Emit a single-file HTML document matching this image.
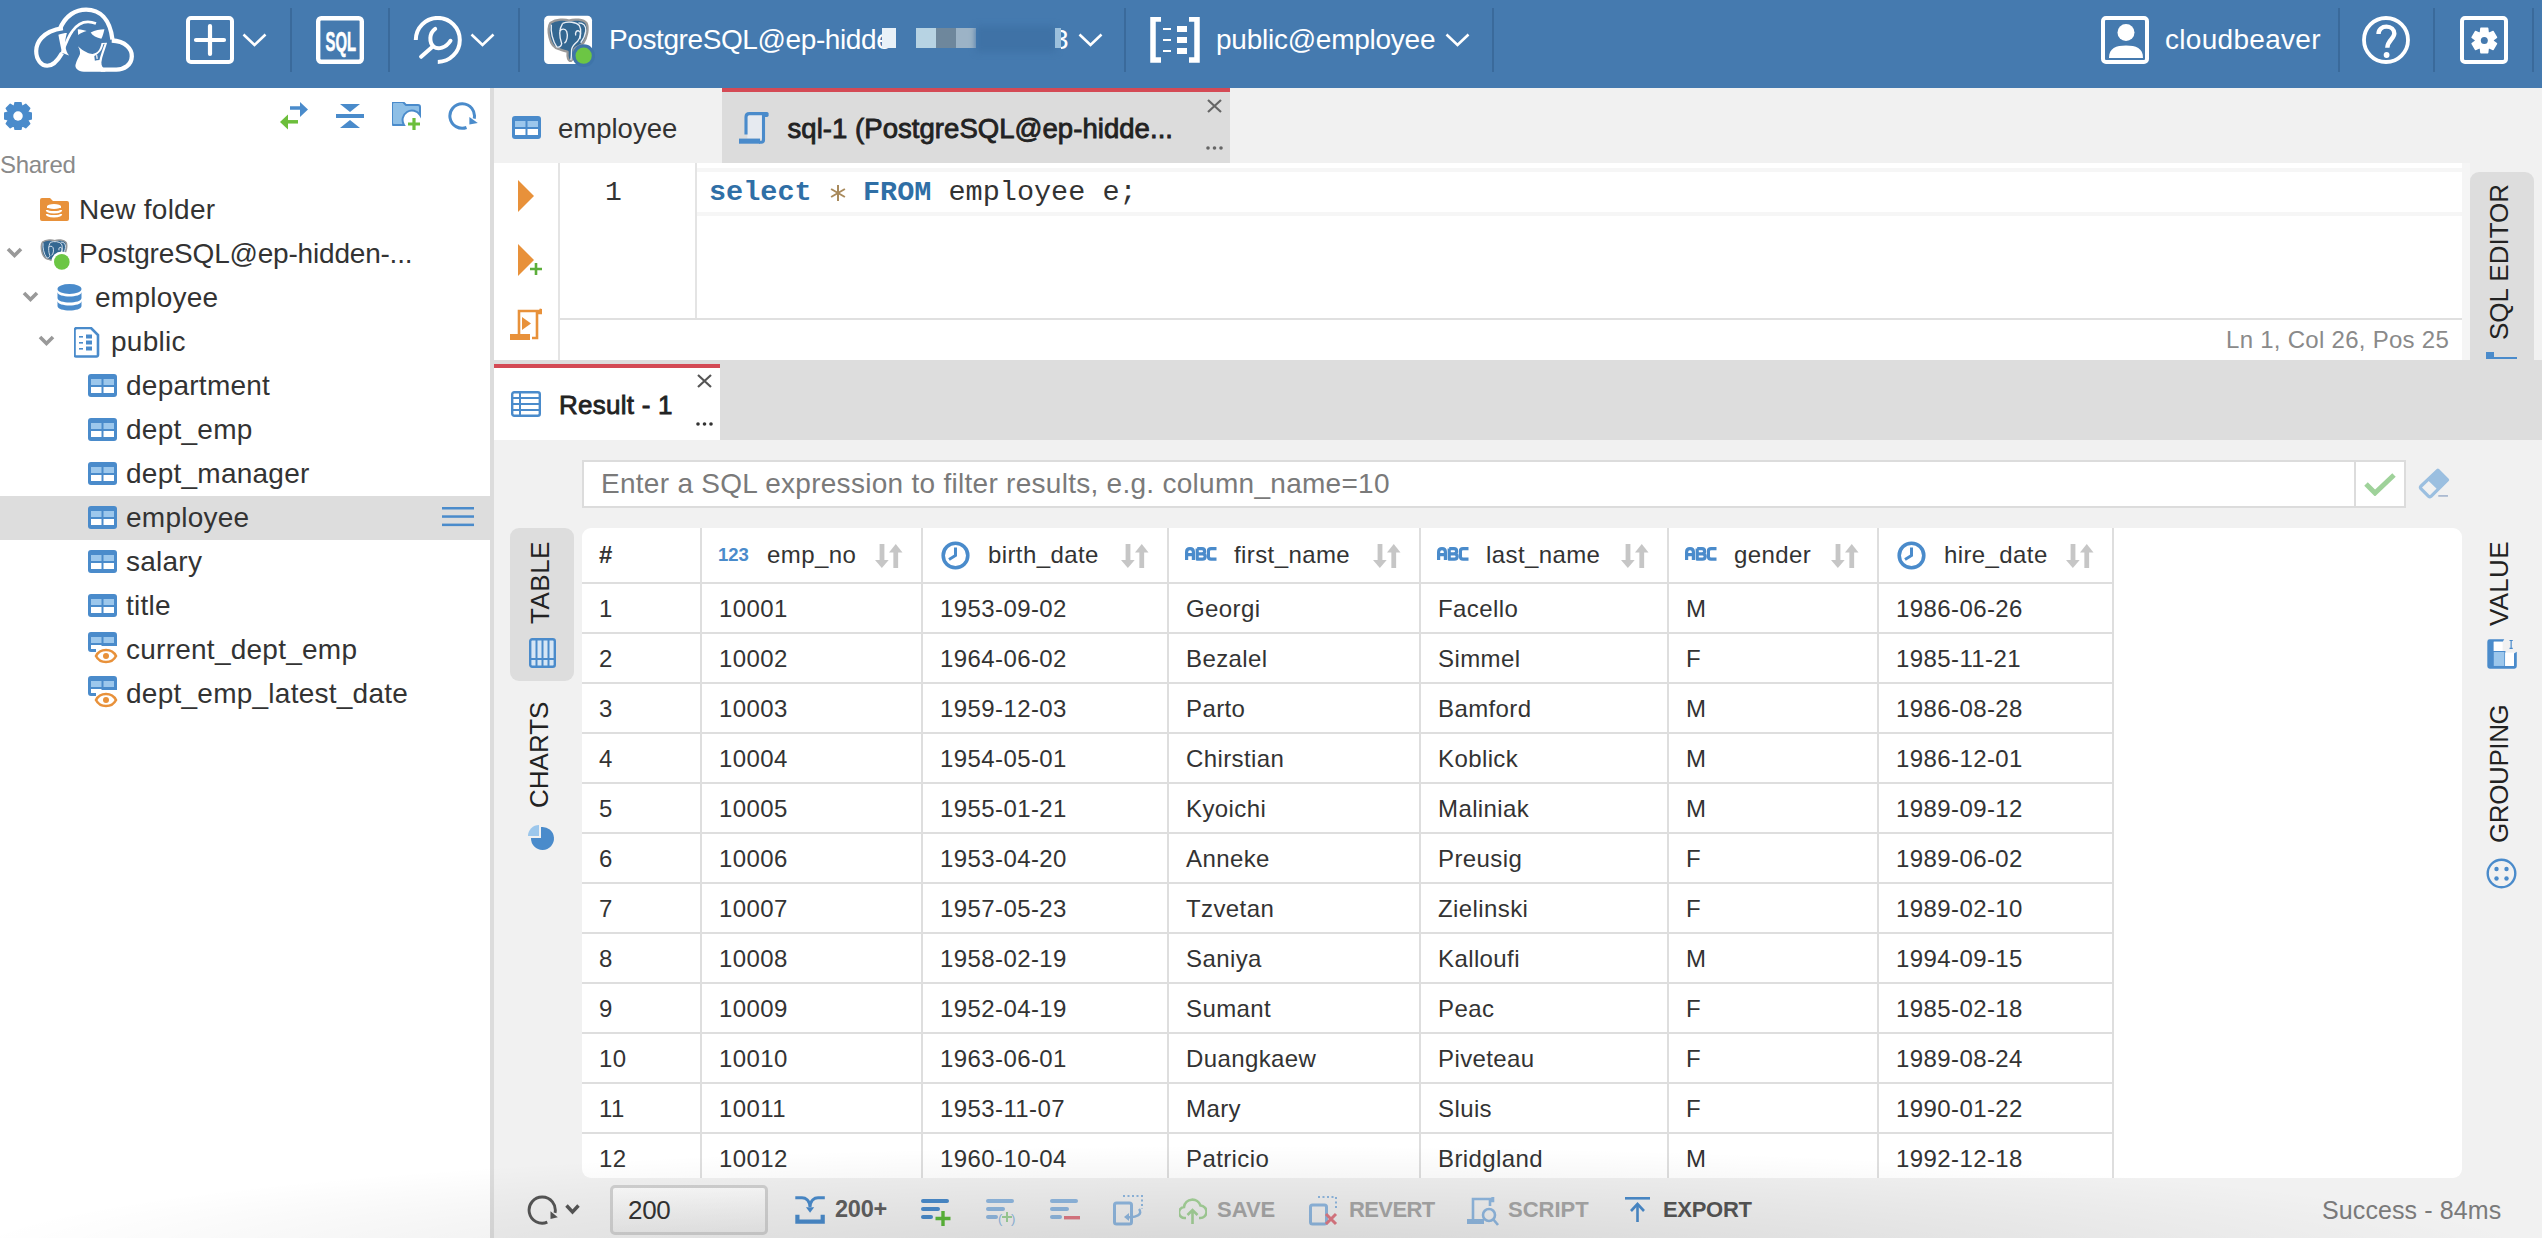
<!DOCTYPE html>
<html><head><meta charset="utf-8"><title>CloudBeaver</title>
<style>
html,body{margin:0;padding:0}
body{width:2542px;height:1238px;overflow:hidden;position:relative;background:#f1f1f1;font-family:"Liberation Sans",sans-serif}
.t{position:absolute;white-space:pre;line-height:1}
.b{position:absolute}
</style></head><body>
<div class="b" style="left:0px;top:0px;width:2542px;height:88px;background:#457aaf"></div>
<svg class="b" style="left:28px;top:4px" width="112" height="72" viewBox="0 0 1926 1238">
<g fill="none" stroke="#fff" stroke-linecap="butt">
<path stroke-width="74" d="M545 440 C640 190 830 95 1000 95 C1230 95 1410 250 1452 610"/>
<path stroke-width="74" d="M1440 628 C1680 635 1790 780 1785 900 C1780 1050 1650 1128 1520 1128 L1250 1128"/>
<path stroke-width="72" d="M600 415 C230 470 141 680 141 810 C141 960 230 1062 330 1062 C430 1062 520 960 585 845"/>
<path stroke-width="46" d="M585 845 C640 700 690 560 760 470 C860 330 1000 270 1169 337"/>
</g>
<path fill="#fff" d="M523 527 C580 505 630 497 669 497 C650 560 635 640 638 703 C650 790 675 850 707 887 C660 870 610 850 584 833 C560 720 540 620 523 527 Z"/>
<path fill="#fff" d="M856 435 C920 440 975 455 1009 466 C950 485 900 505 863 535 Z"/>
<path fill="#fff" d="M1078 488 C1150 450 1240 435 1314 435 C1300 500 1285 560 1261 597 C1180 580 1110 540 1078 488 Z"/>
<path fill="#fff" d="M856 726 C960 820 1060 860 1110 858 C1180 855 1240 800 1265 672 L1360 665 C1320 800 1275 900 1262 1000 C1258 1060 1290 1100 1330 1128 L1330 1163 L960 1163 C860 1160 800 1100 818 1039 C830 980 880 900 894 860 C900 800 880 760 856 726 Z"/>
<path fill="#457aaf" d="M1295 690 L1318 685 C1283 785 1248 880 1228 963 L1185 967 L1150 975 L1140 895 C1220 850 1275 790 1295 690 Z"/>
<path fill="#fff" d="M1170 880 L1190 875 L1200 940 L1180 945 Z"/>
</svg>
<svg class="b" style="left:186px;top:16px" width="48" height="48" viewBox="0 0 48 48"><rect x="2" y="2" width="44" height="44" rx="3" fill="none" stroke="#fff" stroke-width="4"/><path d="M10 24H38M24 10V38" stroke="#fff" stroke-width="4.2" stroke-linecap="round"/></svg>
<svg class="b" style="left:242px;top:32px" width="25" height="16" viewBox="0 0 25 16"><path d="M1.5 2.5 L12.5 13 L23.5 2.5" fill="none" stroke="#fff" stroke-width="2.6"/></svg>
<div class="b" style="left:290px;top:8px;width:2px;height:64px;background:#3a6a9b"></div>
<svg class="b" style="left:316px;top:16px" width="48" height="48" viewBox="0 0 48 48"><rect x="2.2" y="2.2" width="43.6" height="43.6" rx="3" fill="none" stroke="#fff" stroke-width="4.4"/><text x="9.5" y="34.6" font-family="Liberation Sans" font-weight="bold" font-size="28" fill="#fff" stroke="#fff" stroke-width="0.6" textLength="30.5" lengthAdjust="spacingAndGlyphs">SQL</text></svg>
<div class="b" style="left:388px;top:8px;width:2px;height:64px;background:#3a6a9b"></div>
<svg class="b" style="left:412px;top:16px" width="52" height="52" viewBox="0 0 52 52"><path d="M3.8 23.9 A22 22 0 1 1 25.8 45.9" fill="none" stroke="#fff" stroke-width="4"/><path d="M9.1 40.8 L20.5 30.8" stroke="#fff" stroke-width="4" stroke-linecap="round"/><path d="M23.2 12.8 C17 17 17 27 21.8 30.8 C26 34 34 32 38.5 24.8" fill="none" stroke="#fff" stroke-width="4" stroke-linecap="round"/></svg>
<svg class="b" style="left:470px;top:32px" width="25" height="16" viewBox="0 0 25 16"><path d="M1.5 2.5 L12.5 13 L23.5 2.5" fill="none" stroke="#fff" stroke-width="2.6"/></svg>
<div class="b" style="left:518px;top:8px;width:2px;height:64px;background:#3a6a9b"></div>
<svg class="b" style="left:540px;top:12px" width="60" height="56" viewBox="0 0 1326 1238"><rect x="90" y="85" width="1060" height="1065" rx="100" fill="#fff"/>
<g stroke-linejoin="round">
<path d="M230 240 C360 150 560 160 640 190 C760 150 960 160 1030 250 C1080 360 1040 560 960 680 C900 760 800 760 760 820 C760 940 750 1050 690 1080 C620 1090 600 1000 610 880 C560 860 480 850 420 820 C300 800 240 700 210 560 C180 430 180 320 230 240 Z" fill="#336791" stroke="#999" stroke-width="50"/>
<path d="M250 280 C230 430 280 640 370 770 C420 790 470 760 480 700 C430 560 420 380 500 250" fill="none" stroke="#e8eef5" stroke-width="30"/>
<path d="M500 250 C620 200 800 220 870 300 C930 400 900 560 830 650 C770 700 720 740 700 820 C690 920 700 1000 680 1060" fill="none" stroke="#e8eef5" stroke-width="30"/>
<path d="M440 420 C480 360 560 370 590 430 C620 520 600 640 540 690" fill="none" stroke="#e8eef5" stroke-width="30"/>
<path d="M790 520 C770 450 810 400 860 420 C900 440 900 520 880 600" fill="none" stroke="#e8eef5" stroke-width="30"/>
<path d="M850 240 C960 240 1020 300 1010 420 C1000 520 960 600 900 680" fill="none" stroke="#e8eef5" stroke-width="30"/>
</g>
<circle cx="965" cy="965" r="250" fill="#3f74a9"/><circle cx="965" cy="965" r="180" fill="#6cc644"/></svg>
<div class="t" style="left:609.0px;top:26.3px;font-size:28px;color:#fff;letter-spacing:-0.4px;">PostgreSQL@ep-hidde</div>
<div class="b" style="left:882px;top:28px;width:14px;height:20px;background:#e9f1f8"></div>
<div class="b" style="left:916px;top:28px;width:20px;height:20px;background:#b7d3e3"></div>
<div class="b" style="left:936px;top:28px;width:20px;height:20px;background:#6e879c"></div>
<div class="b" style="left:956px;top:28px;width:20px;height:20px;background:#9cb3c6"></div>
<div class="b" style="left:976px;top:26px;width:80px;height:26px;background:#3f72a6;filter:blur(3px)"></div>
<div class="b" style="left:1055px;top:28px;width:6px;height:20px;background:#9cc0dc"></div>
<div class="t" style="left:1061.0px;top:26.3px;font-size:28px;color:#fff;"><span style="display:inline-block;width:8px;overflow:hidden;vertical-align:top"><span style="display:inline-block;margin-left:-8px">3</span></span></div>
<svg class="b" style="left:1078px;top:32px" width="25" height="16" viewBox="0 0 25 16"><path d="M1.5 2.5 L12.5 13 L23.5 2.5" fill="none" stroke="#fff" stroke-width="2.6"/></svg>
<div class="b" style="left:1124px;top:8px;width:2px;height:64px;background:#3a6a9b"></div>
<svg class="b" style="left:1150px;top:17px" width="50" height="46" viewBox="0 0 50 46"><path d="M11 2 H3 V43 H11" fill="none" stroke="#fff" stroke-width="5.5"/>
<path d="M39 2 H47 V43 H39" fill="none" stroke="#fff" stroke-width="5.5"/>
<rect x="13" y="11" width="8" height="2" fill="#fff"/><rect x="13" y="22" width="8" height="2" fill="#fff"/><rect x="13" y="33" width="8" height="2" fill="#fff"/>
<rect x="27" y="9" width="10" height="6" fill="#fff"/><rect x="27" y="20" width="10" height="6" fill="#fff"/><rect x="27" y="31" width="10" height="6" fill="#fff"/></svg>
<div class="t" style="left:1216.0px;top:26.3px;font-size:28px;color:#fff;letter-spacing:-0.25px;">public@employee</div>
<svg class="b" style="left:1445px;top:32px" width="25" height="16" viewBox="0 0 25 16"><path d="M1.5 2.5 L12.5 13 L23.5 2.5" fill="none" stroke="#fff" stroke-width="2.6"/></svg>
<div class="b" style="left:1492px;top:8px;width:2px;height:64px;background:#3a6a9b"></div>
<svg class="b" style="left:2101px;top:16px" width="48" height="48" viewBox="0 0 48 48"><rect x="2" y="2" width="44" height="44" rx="3" fill="none" stroke="#fff" stroke-width="4"/><circle cx="25" cy="16.5" r="8.5" fill="#fff"/><path d="M8 42 C8 32 15 29.5 25 29.5 C35 29.5 42 32 42 42 Z" fill="#fff"/></svg>
<div class="t" style="left:2165.0px;top:26.3px;font-size:28px;color:#fff;letter-spacing:0.3px;">cloudbeaver</div>
<div class="b" style="left:2338px;top:8px;width:2px;height:64px;background:#3a6a9b"></div>
<svg class="b" style="left:2362px;top:16px" width="48" height="48" viewBox="0 0 48 48"><circle cx="24" cy="24" r="22" fill="none" stroke="#fff" stroke-width="3.8"/><path d="M16.5 18 C16.5 13.3 20 10.6 24.5 10.6 C29 10.6 32.3 13.6 32.3 17.6 C32.3 22.5 25.5 24.5 25.3 31.8" fill="none" stroke="#fff" stroke-width="4.4"/><circle cx="24.6" cy="39" r="2.9" fill="#fff"/></svg>
<div class="b" style="left:2433px;top:8px;width:2px;height:64px;background:#3a6a9b"></div>
<svg class="b" style="left:2460px;top:16px" width="48" height="48" viewBox="0 0 48 48"><rect x="2" y="2" width="44" height="44" rx="3" fill="none" stroke="#fff" stroke-width="4"/><polygon points="20.46,16.56 20.94,12.36 27.66,12.36 28.14,16.56 29.26,17.21 33.14,15.52 36.50,21.34 33.10,23.85 33.10,25.15 36.50,27.66 33.14,33.48 29.26,31.79 28.14,32.44 27.66,36.64 20.94,36.64 20.46,32.44 19.34,31.79 15.46,33.48 12.10,27.66 15.50,25.15 15.50,23.85 12.10,21.34 15.46,15.52 19.34,17.21" fill="#fff" stroke="#fff" stroke-width="1.5" stroke-linejoin="round"/><circle cx="24.3" cy="24.5" r="3.50" fill="#457aaf"/></svg>
<div class="b" style="left:2532px;top:8px;width:2px;height:64px;background:#3a6a9b"></div>
<div class="b" style="left:0px;top:88px;width:490px;height:1150px;background:#fff"></div>
<div class="b" style="left:490px;top:88px;width:4px;height:1150px;background:#dcdcdc"></div>
<svg class="b" style="left:4px;top:102px" width="28" height="28" viewBox="0 0 28 28"><polygon points="10.07,4.72 11.22,0.28 16.78,0.28 17.93,4.72 17.79,4.66 21.74,2.33 25.67,6.26 23.34,10.21 23.28,10.07 27.72,11.22 27.72,16.78 23.28,17.93 23.34,17.79 25.67,21.74 21.74,25.67 17.79,23.34 17.93,23.28 16.78,27.72 11.22,27.72 10.07,23.28 10.21,23.34 6.26,25.67 2.33,21.74 4.66,17.79 4.72,17.93 0.28,16.78 0.28,11.22 4.72,10.07 4.66,10.21 2.33,6.26 6.26,2.33 10.21,4.66" fill="#4a8bcb" stroke="#4a8bcb" stroke-width="1.5" stroke-linejoin="round"/><circle cx="14" cy="14" r="4.76" fill="#fff"/></svg>
<svg class="b" style="left:280px;top:102px" width="28" height="28" viewBox="0 0 28 28"><path d="M10 6 H20" stroke="#4a8bcb" stroke-width="3.5"/><path d="M20 0 L28 7.5 L20 15 Z" fill="#4a8bcb"/><path d="M8 19.8 H18" stroke="#6cbe3b" stroke-width="3.5"/><path d="M8 12.5 L0 20 L8 27.5 Z" fill="#6cbe3b"/></svg>
<svg class="b" style="left:336px;top:102px" width="28" height="28" viewBox="0 0 28 28"><path d="M4 2 H24 L14 10 Z" fill="#4a8bcb"/><rect x="0" y="12" width="28" height="4" fill="#4a8bcb"/><path d="M4 26 H24 L14 18 Z" fill="#4a8bcb"/></svg>
<svg class="b" style="left:392px;top:102px" width="29" height="28" viewBox="0 0 29 28"><path d="M2 0 H11 L14 3 H26 A2 2 0 0 1 28 5 V13 A9 9 0 0 0 12 23 H2 A2 2 0 0 1 0 21 V2 A2 2 0 0 1 2 0Z" fill="#8ebfe6" stroke="#4a8bcb" stroke-width="2"/><path d="M22 16 V28 M16 22 H28" stroke="#6cbe3b" stroke-width="3.2"/></svg>
<svg class="b" style="left:448px;top:102px" width="31" height="30" viewBox="0 0 31 30"><path d="M18.5 25.5 A12.3 12.3 0 1 1 26.2 16.6" fill="none" stroke="#4a8bcb" stroke-width="3"/><path d="M21.4 15 L21.4 22.4 L29.8 21.1 Z" fill="#4a8bcb"/></svg>
<div class="t" style="left:0.0px;top:153.2px;font-size:24px;color:#8a8a8a;letter-spacing:-0.3px;">Shared</div>
<div class="b" style="left:0px;top:496px;width:490px;height:44px;background:#dddddd"></div>
<svg class="b" style="left:40px;top:198px" width="30" height="23" viewBox="0 0 30 23"><path d="M0 2 A2 2 0 0 1 2 0 H10 L13 3 H27 A2 2 0 0 1 29 5 V21 A2 2 0 0 1 27 23 H2 A2 2 0 0 1 0 21Z" fill="#e8913a"/><ellipse cx="14" cy="8.5" rx="7" ry="2.6" fill="#fff"/><path d="M7 12 C7 15 21 15 21 12 M7 16 C7 19 21 19 21 16" fill="none" stroke="#fff" stroke-width="2.4"/><rect x="7" y="8" width="14" height="2" fill="#fff"/></svg>
<div class="t" style="left:79.0px;top:195.6px;font-size:28px;color:#333;letter-spacing:0.25px;">New folder</div>
<svg class="b" style="left:6px;top:247px" width="17" height="12" viewBox="0 0 17 12"><path d="M2 2 L8.5 8.5 L15 2" fill="none" stroke="#999" stroke-width="3.6"/></svg>
<svg class="b" style="left:30px;top:228px" width="45" height="45" viewBox="-192.5 -236.6 1525 1525">
<g stroke-linejoin="round">
<path d="M230 240 C360 150 560 160 640 190 C760 150 960 160 1030 250 C1080 360 1040 560 960 680 C900 760 800 760 760 820 C760 940 750 1050 690 1080 C620 1090 600 1000 610 880 C560 860 480 850 420 820 C300 800 240 700 210 560 C180 430 180 320 230 240 Z" fill="#336791" stroke="#999" stroke-width="50"/>
<path d="M250 280 C230 430 280 640 370 770 C420 790 470 760 480 700 C430 560 420 380 500 250" fill="none" stroke="#e8eef5" stroke-width="30"/>
<path d="M500 250 C620 200 800 220 870 300 C930 400 900 560 830 650 C770 700 720 740 700 820 C690 920 700 1000 680 1060" fill="none" stroke="#e8eef5" stroke-width="30"/>
<path d="M440 420 C480 360 560 370 590 430 C620 520 600 640 540 690" fill="none" stroke="#e8eef5" stroke-width="30"/>
<path d="M790 520 C770 450 810 400 860 420 C900 440 900 520 880 600" fill="none" stroke="#e8eef5" stroke-width="30"/>
<path d="M850 240 C960 240 1020 300 1010 420 C1000 520 960 600 900 680" fill="none" stroke="#e8eef5" stroke-width="30"/>
</g>
<circle cx="885" cy="912" r="355" fill="#fff"/><circle cx="885" cy="912" r="265" fill="#6cc644"/></svg>
<div class="t" style="left:79.0px;top:239.6px;font-size:28px;color:#333;letter-spacing:-0.2px;">PostgreSQL@ep-hidden-...</div>
<svg class="b" style="left:22px;top:291px" width="17" height="12" viewBox="0 0 17 12"><path d="M2 2 L8.5 8.5 L15 2" fill="none" stroke="#999" stroke-width="3.6"/></svg>
<svg class="b" style="left:57px;top:284px" width="25" height="28" viewBox="0 0 25 28"><ellipse cx="12.5" cy="5" rx="12" ry="5" fill="#4a8bcb"/><path d="M0.5 8 C0.5 14 24.5 14 24.5 8 V14 C24.5 20 0.5 20 0.5 14Z" fill="#4a8bcb"/><path d="M0.5 17 C0.5 23 24.5 23 24.5 17 V22 C24.5 28 0.5 28 0.5 22Z" fill="#4a8bcb"/></svg>
<div class="t" style="left:95.0px;top:283.6px;font-size:28px;color:#333;letter-spacing:0.25px;">employee</div>
<svg class="b" style="left:38px;top:335px" width="17" height="12" viewBox="0 0 17 12"><path d="M2 2 L8.5 8.5 L15 2" fill="none" stroke="#999" stroke-width="3.6"/></svg>
<svg class="b" style="left:74px;top:327px" width="26" height="31" viewBox="0 0 26 31"><path d="M2 1 H17 L24 8 V28 A1.5 1.5 0 0 1 22.5 29.5 H2 A1.5 1.5 0 0 1 0.5 28 V2.5Z" fill="none" stroke="#4a8bcb" stroke-width="2.6"/><rect x="5" y="9" width="4" height="1.6" fill="#4a8bcb"/><rect x="5" y="15" width="4" height="1.6" fill="#4a8bcb"/><rect x="5" y="21" width="4" height="1.6" fill="#4a8bcb"/><rect x="12" y="7.5" width="6" height="4" fill="#4a8bcb"/><rect x="12" y="13.5" width="6" height="4" fill="#4a8bcb"/><rect x="12" y="19.5" width="6" height="4" fill="#4a8bcb"/></svg>
<div class="t" style="left:111.0px;top:327.6px;font-size:28px;color:#333;letter-spacing:0.25px;">public</div>
<svg class="b" style="left:88px;top:374px" width="29" height="23" viewBox="0 0 29 23"><rect x="0" y="0" width="29" height="23" rx="3" fill="#4a8bcb"/><rect x="3" y="5" width="10.5" height="6" fill="#9cc7ec"/><rect x="15.5" y="5" width="10.5" height="6" fill="#9cc7ec"/><rect x="3" y="13" width="10.5" height="6" fill="#fff"/><rect x="15.5" y="13" width="10.5" height="6" fill="#fff"/></svg>
<div class="t" style="left:126.0px;top:371.6px;font-size:28px;color:#333;letter-spacing:0.25px;">department</div>
<svg class="b" style="left:88px;top:418px" width="29" height="23" viewBox="0 0 29 23"><rect x="0" y="0" width="29" height="23" rx="3" fill="#4a8bcb"/><rect x="3" y="5" width="10.5" height="6" fill="#9cc7ec"/><rect x="15.5" y="5" width="10.5" height="6" fill="#9cc7ec"/><rect x="3" y="13" width="10.5" height="6" fill="#fff"/><rect x="15.5" y="13" width="10.5" height="6" fill="#fff"/></svg>
<div class="t" style="left:126.0px;top:415.6px;font-size:28px;color:#333;letter-spacing:0.25px;">dept_emp</div>
<svg class="b" style="left:88px;top:462px" width="29" height="23" viewBox="0 0 29 23"><rect x="0" y="0" width="29" height="23" rx="3" fill="#4a8bcb"/><rect x="3" y="5" width="10.5" height="6" fill="#9cc7ec"/><rect x="15.5" y="5" width="10.5" height="6" fill="#9cc7ec"/><rect x="3" y="13" width="10.5" height="6" fill="#fff"/><rect x="15.5" y="13" width="10.5" height="6" fill="#fff"/></svg>
<div class="t" style="left:126.0px;top:459.6px;font-size:28px;color:#333;letter-spacing:0.25px;">dept_manager</div>
<svg class="b" style="left:88px;top:506px" width="29" height="23" viewBox="0 0 29 23"><rect x="0" y="0" width="29" height="23" rx="3" fill="#4a8bcb"/><rect x="3" y="5" width="10.5" height="6" fill="#9cc7ec"/><rect x="15.5" y="5" width="10.5" height="6" fill="#9cc7ec"/><rect x="3" y="13" width="10.5" height="6" fill="#fff"/><rect x="15.5" y="13" width="10.5" height="6" fill="#fff"/></svg>
<div class="t" style="left:126.0px;top:503.6px;font-size:28px;color:#333;letter-spacing:0.25px;">employee</div>
<svg class="b" style="left:88px;top:550px" width="29" height="23" viewBox="0 0 29 23"><rect x="0" y="0" width="29" height="23" rx="3" fill="#4a8bcb"/><rect x="3" y="5" width="10.5" height="6" fill="#9cc7ec"/><rect x="15.5" y="5" width="10.5" height="6" fill="#9cc7ec"/><rect x="3" y="13" width="10.5" height="6" fill="#fff"/><rect x="15.5" y="13" width="10.5" height="6" fill="#fff"/></svg>
<div class="t" style="left:126.0px;top:547.6px;font-size:28px;color:#333;letter-spacing:0.25px;">salary</div>
<svg class="b" style="left:88px;top:594px" width="29" height="23" viewBox="0 0 29 23"><rect x="0" y="0" width="29" height="23" rx="3" fill="#4a8bcb"/><rect x="3" y="5" width="10.5" height="6" fill="#9cc7ec"/><rect x="15.5" y="5" width="10.5" height="6" fill="#9cc7ec"/><rect x="3" y="13" width="10.5" height="6" fill="#fff"/><rect x="15.5" y="13" width="10.5" height="6" fill="#fff"/></svg>
<div class="t" style="left:126.0px;top:591.6px;font-size:28px;color:#333;letter-spacing:0.25px;">title</div>
<svg class="b" style="left:88px;top:632px" width="30" height="32" viewBox="0 0 30 32"><path d="M3 0 H26 A3 3 0 0 1 29 3 V14 H8 V20 H3 A3 3 0 0 1 0 17 V3 A3 3 0 0 1 3 0Z" fill="#4a8bcb"/><rect x="3" y="5" width="10.5" height="6" fill="#9cc7ec"/><rect x="15.5" y="5" width="10.5" height="6" fill="#9cc7ec"/><rect x="3" y="13" width="10.5" height="4" fill="#fff"/><path d="M8 24 C12 16 24 16 28 24 C24 32 12 32 8 24Z" fill="#fff" stroke="#e8913a" stroke-width="2.6"/><circle cx="18" cy="24" r="3" fill="#e8913a"/></svg>
<div class="t" style="left:126.0px;top:635.6px;font-size:28px;color:#333;letter-spacing:0.25px;">current_dept_emp</div>
<svg class="b" style="left:88px;top:676px" width="30" height="32" viewBox="0 0 30 32"><path d="M3 0 H26 A3 3 0 0 1 29 3 V14 H8 V20 H3 A3 3 0 0 1 0 17 V3 A3 3 0 0 1 3 0Z" fill="#4a8bcb"/><rect x="3" y="5" width="10.5" height="6" fill="#9cc7ec"/><rect x="15.5" y="5" width="10.5" height="6" fill="#9cc7ec"/><rect x="3" y="13" width="10.5" height="4" fill="#fff"/><path d="M8 24 C12 16 24 16 28 24 C24 32 12 32 8 24Z" fill="#fff" stroke="#e8913a" stroke-width="2.6"/><circle cx="18" cy="24" r="3" fill="#e8913a"/></svg>
<div class="t" style="left:126.0px;top:679.6px;font-size:28px;color:#333;letter-spacing:0.25px;">dept_emp_latest_date</div>
<svg class="b" style="left:442px;top:507px" width="32" height="20" viewBox="0 0 32 20"><rect x="0" y="0" width="32" height="2.5" fill="#4a8bcb"/><rect x="0" y="8.3" width="32" height="2.5" fill="#4a8bcb"/><rect x="0" y="16.6" width="32" height="2.5" fill="#4a8bcb"/></svg>
<div class="b" style="left:494px;top:88px;width:2048px;height:75px;background:#f1f1f1"></div>
<svg class="b" style="left:512px;top:116px" width="29" height="23" viewBox="0 0 29 23"><rect x="0" y="0" width="29" height="23" rx="3" fill="#4a8bcb"/><rect x="3" y="5" width="10.5" height="6" fill="#9cc7ec"/><rect x="15.5" y="5" width="10.5" height="6" fill="#9cc7ec"/><rect x="3" y="13" width="10.5" height="6" fill="#fff"/><rect x="15.5" y="13" width="10.5" height="6" fill="#fff"/></svg>
<div class="t" style="left:558.0px;top:114.7px;font-size:27.5px;color:#333;">employee</div>
<div class="b" style="left:722px;top:88px;width:508px;height:4px;background:#d44a55"></div>
<div class="b" style="left:722px;top:92px;width:508px;height:71px;background:#dcdcdc"></div>
<svg class="b" style="left:739px;top:112px" width="31" height="33" viewBox="0 0 31 33"><rect x="8.3" y="3" width="14.7" height="23.6" fill="#e6eaf0"/><path d="M7 22.6 V5 Q7 1.6 10.4 1.6 H27.5" fill="none" stroke="#4a8bcb" stroke-width="3.1"/><path d="M26 0 H28 Q29.6 0 29.6 1.6 V3.3 Q29.6 4.9 28 4.9 H26 Z" fill="#4a8bcb"/><path d="M24.5 2 V28 Q24.5 30.2 22.3 30.2 H20" fill="none" stroke="#4a8bcb" stroke-width="3.1"/><rect x="0" y="26.6" width="21" height="5.1" fill="#4a8bcb"/></svg>
<div class="t" style="left:787.5px;top:114.7px;font-size:27.5px;color:#222;letter-spacing:0.05px;-webkit-text-stroke:0.85px #222;">sql-1 (PostgreSQL@ep-hidde...</div>
<svg class="b" style="left:1207px;top:99px" width="15" height="14" viewBox="0 0 15 14"><path d="M1 1 L14 13 M14 1 L1 13" stroke="#666" stroke-width="2.2"/></svg>
<svg class="b" style="left:1206px;top:146px" width="17" height="4" viewBox="0 0 17 4"><circle cx="2" cy="2" r="1.8" fill="#666"/><circle cx="8.5" cy="2" r="1.8" fill="#666"/><circle cx="15" cy="2" r="1.8" fill="#666"/></svg>
<div class="b" style="left:494px;top:163px;width:1968px;height:197px;background:#fff"></div>
<div class="b" style="left:2462px;top:163px;width:80px;height:197px;background:#f1f1f1"></div>
<div class="b" style="left:2462px;top:163px;width:8px;height:197px;background:#f5f5f5"></div>
<div class="b" style="left:2470px;top:172px;width:64px;height:188px;background:#dddddd;border-radius:9px 9px 0 0"></div>
<div class="t" style="left:2485.9px;top:340.0px;font-size:26px;color:#222;transform:rotate(-90deg);transform-origin:0 0">SQL EDITOR</div>
<svg class="b" style="left:2486px;top:352px" width="31" height="8" viewBox="0 0 31 8"><rect x="0" y="0" width="8" height="6" fill="#4a8bcb"/><rect x="0" y="5" width="31" height="2" fill="#4a8bcb"/></svg>
<div class="b" style="left:558px;top:163px;width:2px;height:197px;background:#e4e4e4"></div>
<div class="b" style="left:695px;top:163px;width:2px;height:156px;background:#e4e4e4"></div>
<div class="b" style="left:560px;top:318px;width:1902px;height:2px;background:#e0e0e0"></div>
<div class="b" style="left:697px;top:168px;width:1765px;height:4px;background:#f6f6f6"></div>
<div class="b" style="left:697px;top:212px;width:1765px;height:4px;background:#f6f6f6"></div>
<svg class="b" style="left:518px;top:180px" width="17" height="32" viewBox="0 0 17 32"><path d="M0 0 L16 16 L0 32 Z" fill="#e8913a"/></svg>
<svg class="b" style="left:518px;top:244px" width="26" height="33" viewBox="0 0 26 33"><path d="M0 0 L16 16 L0 32 Z" fill="#e8913a"/><path d="M18 19 V31 M12 25 H24" stroke="#5cae3a" stroke-width="2.6"/></svg>
<svg class="b" style="left:510px;top:308px" width="32" height="32" viewBox="0 0 32 32"><path d="M9 28 V3 H30 L31 1 V5 H27 V30 H22" fill="none" stroke="#e8913a" stroke-width="2.6"/><rect x="0" y="26" width="20" height="6" fill="#e8913a"/><path d="M12 9 L21 15.5 L12 22 Z" fill="#e8913a"/></svg>
<div class="t" style="left:605.0px;top:179.2px;font-size:28px;color:#333;font-family:'Liberation Mono',monospace;">1</div>
<div class="t" style="left:709.0px;top:179.0px;font-size:28.5px;color:#333;font-family:'Liberation Mono',monospace;"><span style="color:#2f6fa6;font-weight:bold">select</span> <span style="color:#a98a5c"> </span> <span style="color:#2f6fa6;font-weight:bold">FROM</span> employee e;</div>
<svg class="b" style="left:829px;top:184px" width="18" height="18" viewBox="0 0 18 18"><path d="M9 1 V17 M2.1 5 L15.9 13 M2.1 13 L15.9 5" stroke="#a98a5c" stroke-width="2"/></svg>
<div class="t" style="left:2226.0px;top:328.1px;font-size:24px;color:#8a8a8a;letter-spacing:0.28px;">Ln 1, Col 26, Pos 25</div>
<div class="b" style="left:494px;top:360px;width:2048px;height:80px;background:#dddddd"></div>
<div class="b" style="left:494px;top:364px;width:226px;height:4px;background:#d44a55"></div>
<div class="b" style="left:494px;top:368px;width:226px;height:72px;background:#fff"></div>
<svg class="b" style="left:511px;top:391px" width="30" height="26" viewBox="0 0 30 26"><rect x="1.2" y="1.2" width="27.6" height="23.6" rx="2" fill="#fff" stroke="#4a8bcb" stroke-width="2.4"/><path d="M1 7 H29 M1 13 H29 M1 19 H29 M9 1 V25" stroke="#4a8bcb" stroke-width="2"/></svg>
<div class="t" style="left:559.0px;top:392.0px;font-size:26px;color:#222;letter-spacing:0.25px;-webkit-text-stroke:0.8px #222;">Result - 1</div>
<svg class="b" style="left:697px;top:374px" width="15" height="14" viewBox="0 0 15 14"><path d="M1 1 L14 13 M14 1 L1 13" stroke="#555" stroke-width="2.2"/></svg>
<svg class="b" style="left:696px;top:422px" width="17" height="4" viewBox="0 0 17 4"><circle cx="2" cy="2" r="1.8" fill="#333"/><circle cx="8.5" cy="2" r="1.8" fill="#333"/><circle cx="15" cy="2" r="1.8" fill="#333"/></svg>
<div class="b" style="left:494px;top:440px;width:2048px;height:798px;background:#f1f1f1"></div>
<div class="b" style="left:582px;top:460px;width:1824px;height:48px;background:#fff;border:2px solid #dcdcdc;box-sizing:border-box"></div>
<div class="b" style="left:2354px;top:460px;width:2px;height:48px;background:#dcdcdc"></div>
<div class="t" style="left:601.0px;top:470.3px;font-size:28px;color:#7a7a7a;letter-spacing:0.28px;">Enter a SQL expression to filter results, e.g. column_name=10</div>
<svg class="b" style="left:2364px;top:472px" width="32" height="24" viewBox="0 0 32 24"><path d="M2 12 L11 21 L30 3" fill="none" stroke="#9fd29a" stroke-width="5"/></svg>
<svg class="b" style="left:2410px;top:460px" width="50" height="50" viewBox="0 0 1238 1238"><path d="M690 250 L930 490 L520 900 Q490 925 460 900 L270 710 Q245 680 270 650 Z" fill="none" stroke="#9bbfe0" stroke-width="80" stroke-linejoin="round"/><path d="M690 250 L930 490 L700 720 L450 480 Z" fill="#9bbfe0" stroke="#9bbfe0" stroke-width="40" stroke-linejoin="round"/><rect x="700" y="868" width="240" height="42" fill="#a7b7cf"/></svg>
<div class="b" style="left:510px;top:528px;width:64px;height:153px;background:#dddddd;border-radius:9px"></div>
<div class="t" style="left:526.9px;top:624.0px;font-size:26px;color:#222;letter-spacing:0.5px;transform:rotate(-90deg);transform-origin:0 0">TABLE</div>
<svg class="b" style="left:529px;top:638px" width="27" height="30" viewBox="0 0 27 30"><rect x="1.2" y="1.2" width="24.6" height="27.6" rx="2" fill="#d6e6f5" stroke="#4a8bcb" stroke-width="2.4"/><path d="M7.5 1 V29 M13.5 1 V29 M19.5 1 V29 M1 21 H26" stroke="#4a8bcb" stroke-width="2"/></svg>
<div class="t" style="left:525.9px;top:808.0px;font-size:26px;color:#222;transform:rotate(-90deg);transform-origin:0 0">CHARTS</div>
<svg class="b" style="left:528px;top:824px" width="27" height="27" viewBox="0 0 27 27"><path d="M13 3 A11.5 11.5 0 1 1 3 14 H13 Z" fill="#4a8bcb"/><path d="M11 1 V12 H0 A11 11 0 0 1 11 1Z" fill="#9cc7ec"/></svg>
<div class="t" style="left:2486.4px;top:626.0px;font-size:26px;color:#222;letter-spacing:0.3px;transform:rotate(-90deg);transform-origin:0 0">VALUE</div>
<svg class="b" style="left:2476px;top:630px" width="50" height="50" viewBox="0 0 1238 1238"><path d="M340 230 H700 L660 290 H440 V520 H730 L720 890 H940 V580 L1010 540 V900 Q1010 960 950 960 H340 Q280 960 280 900 V290 Q280 230 340 230 Z" fill="#4a8bcb"/><rect x="440" y="290" width="220" height="230" fill="#fff"/><rect x="440" y="545" width="262" height="345" fill="#9cc7ec"/><rect x="722" y="560" width="218" height="330" fill="#fff"/><path d="M830 260 H910 M870 260 V455 M830 455 H910" stroke="#4a8bcb" stroke-width="30"/></svg>
<div class="t" style="left:2486.4px;top:843.0px;font-size:26px;color:#222;letter-spacing:-0.4px;transform:rotate(-90deg);transform-origin:0 0">GROUPING</div>
<svg class="b" style="left:2486px;top:858px" width="31" height="31" viewBox="0 0 31 31"><circle cx="15.5" cy="15.5" r="13.8" fill="none" stroke="#4a8bcb" stroke-width="2.4"/><circle cx="10.5" cy="11" r="2.2" fill="#4a8bcb"/><circle cx="20.5" cy="11" r="2.2" fill="#4a8bcb"/><circle cx="10.5" cy="20.5" r="2.2" fill="#4a8bcb"/><circle cx="20.5" cy="20.5" r="2.2" fill="#4a8bcb"/></svg>
<div class="b" style="left:582px;top:528px;width:1880px;height:650px;background:#fff;border-radius:9px;overflow:hidden">
</div>
<div class="b" style="left:582px;top:582px;width:1532px;height:2px;background:#dedede"></div>
<div class="b" style="left:582px;top:632px;width:1532px;height:2px;background:#dedede"></div>
<div class="b" style="left:582px;top:682px;width:1532px;height:2px;background:#dedede"></div>
<div class="b" style="left:582px;top:732px;width:1532px;height:2px;background:#dedede"></div>
<div class="b" style="left:582px;top:782px;width:1532px;height:2px;background:#dedede"></div>
<div class="b" style="left:582px;top:832px;width:1532px;height:2px;background:#dedede"></div>
<div class="b" style="left:582px;top:882px;width:1532px;height:2px;background:#dedede"></div>
<div class="b" style="left:582px;top:932px;width:1532px;height:2px;background:#dedede"></div>
<div class="b" style="left:582px;top:982px;width:1532px;height:2px;background:#dedede"></div>
<div class="b" style="left:582px;top:1032px;width:1532px;height:2px;background:#dedede"></div>
<div class="b" style="left:582px;top:1082px;width:1532px;height:2px;background:#dedede"></div>
<div class="b" style="left:582px;top:1132px;width:1532px;height:2px;background:#dedede"></div>
<div class="b" style="left:582px;top:1182px;width:1532px;height:2px;background:#dedede"></div>
<div class="b" style="left:700px;top:528px;width:2px;height:650px;background:#dedede"></div>
<div class="b" style="left:921px;top:528px;width:2px;height:650px;background:#dedede"></div>
<div class="b" style="left:1167px;top:528px;width:2px;height:650px;background:#dedede"></div>
<div class="b" style="left:1419px;top:528px;width:2px;height:650px;background:#dedede"></div>
<div class="b" style="left:1667px;top:528px;width:2px;height:650px;background:#dedede"></div>
<div class="b" style="left:1877px;top:528px;width:2px;height:650px;background:#dedede"></div>
<div class="b" style="left:2112px;top:528px;width:2px;height:650px;background:#dedede"></div>
<div class="t" style="left:599.0px;top:542.7px;font-size:24px;color:#333;font-weight:bold;">#</div>
<div class="t" style="left:718px;top:546px;font-size:18.5px;font-weight:bold;color:#4a8bcb">123</div>
<div class="t" style="left:767.0px;top:542.7px;font-size:24px;color:#333;letter-spacing:0.4px;">emp_no</div>
<svg class="b" style="left:875px;top:544px" width="28" height="24" viewBox="0 0 28 24"><path d="M7 0 V17" stroke="#c6c6c6" stroke-width="4.8"/><path d="M0 16 L13.7 16 L6.85 24 Z" fill="#c6c6c6"/><path d="M20.75 24 V7.5" stroke="#c6c6c6" stroke-width="4.8"/><path d="M14 8.6 L27.5 8.6 L20.75 0 Z" fill="#c6c6c6"/></svg>
<svg class="b" style="left:941px;top:541px" width="29" height="29" viewBox="0 0 29 29"><circle cx="14.5" cy="14.5" r="12.3" fill="none" stroke="#4a8bcb" stroke-width="3.6"/><path d="M14.5 6.5 V14.5 L8 18.5" fill="none" stroke="#4a8bcb" stroke-width="3"/></svg>
<div class="t" style="left:988.0px;top:542.7px;font-size:24px;color:#333;letter-spacing:0.4px;">birth_date</div>
<svg class="b" style="left:1121px;top:544px" width="28" height="24" viewBox="0 0 28 24"><path d="M7 0 V17" stroke="#c6c6c6" stroke-width="4.8"/><path d="M0 16 L13.7 16 L6.85 24 Z" fill="#c6c6c6"/><path d="M20.75 24 V7.5" stroke="#c6c6c6" stroke-width="4.8"/><path d="M14 8.6 L27.5 8.6 L20.75 0 Z" fill="#c6c6c6"/></svg>
<svg class="b" style="left:1185px;top:547px" width="33" height="14" viewBox="0 0 33 14"><g fill="none" stroke="#4a8bcb" stroke-width="3.2" stroke-linejoin="round"><path d="M1.6 13 V5 Q1.6 1.6 5 1.6 Q8.4 1.6 8.4 5 V13 M1.6 7.6 H8.4"/><path d="M12.2 1.6 H17 Q19.6 1.6 19.6 4.2 Q19.6 6.8 17 6.8 H12.2 M12.2 6.8 H17.4 Q20.2 6.8 20.2 9.6 Q20.2 12.2 17.4 12.2 H12.2 Z M12.2 1.6 V12.2"/><path d="M31.5 1.6 H26 Q23.4 1.6 23.4 4.2 V9.6 Q23.4 12.2 26 12.2 H31.5"/></g></svg>
<div class="t" style="left:1234.0px;top:542.7px;font-size:24px;color:#333;letter-spacing:0.4px;">first_name</div>
<svg class="b" style="left:1373px;top:544px" width="28" height="24" viewBox="0 0 28 24"><path d="M7 0 V17" stroke="#c6c6c6" stroke-width="4.8"/><path d="M0 16 L13.7 16 L6.85 24 Z" fill="#c6c6c6"/><path d="M20.75 24 V7.5" stroke="#c6c6c6" stroke-width="4.8"/><path d="M14 8.6 L27.5 8.6 L20.75 0 Z" fill="#c6c6c6"/></svg>
<svg class="b" style="left:1437px;top:547px" width="33" height="14" viewBox="0 0 33 14"><g fill="none" stroke="#4a8bcb" stroke-width="3.2" stroke-linejoin="round"><path d="M1.6 13 V5 Q1.6 1.6 5 1.6 Q8.4 1.6 8.4 5 V13 M1.6 7.6 H8.4"/><path d="M12.2 1.6 H17 Q19.6 1.6 19.6 4.2 Q19.6 6.8 17 6.8 H12.2 M12.2 6.8 H17.4 Q20.2 6.8 20.2 9.6 Q20.2 12.2 17.4 12.2 H12.2 Z M12.2 1.6 V12.2"/><path d="M31.5 1.6 H26 Q23.4 1.6 23.4 4.2 V9.6 Q23.4 12.2 26 12.2 H31.5"/></g></svg>
<div class="t" style="left:1486.0px;top:542.7px;font-size:24px;color:#333;letter-spacing:0.4px;">last_name</div>
<svg class="b" style="left:1621px;top:544px" width="28" height="24" viewBox="0 0 28 24"><path d="M7 0 V17" stroke="#c6c6c6" stroke-width="4.8"/><path d="M0 16 L13.7 16 L6.85 24 Z" fill="#c6c6c6"/><path d="M20.75 24 V7.5" stroke="#c6c6c6" stroke-width="4.8"/><path d="M14 8.6 L27.5 8.6 L20.75 0 Z" fill="#c6c6c6"/></svg>
<svg class="b" style="left:1685px;top:547px" width="33" height="14" viewBox="0 0 33 14"><g fill="none" stroke="#4a8bcb" stroke-width="3.2" stroke-linejoin="round"><path d="M1.6 13 V5 Q1.6 1.6 5 1.6 Q8.4 1.6 8.4 5 V13 M1.6 7.6 H8.4"/><path d="M12.2 1.6 H17 Q19.6 1.6 19.6 4.2 Q19.6 6.8 17 6.8 H12.2 M12.2 6.8 H17.4 Q20.2 6.8 20.2 9.6 Q20.2 12.2 17.4 12.2 H12.2 Z M12.2 1.6 V12.2"/><path d="M31.5 1.6 H26 Q23.4 1.6 23.4 4.2 V9.6 Q23.4 12.2 26 12.2 H31.5"/></g></svg>
<div class="t" style="left:1734.0px;top:542.7px;font-size:24px;color:#333;letter-spacing:0.4px;">gender</div>
<svg class="b" style="left:1831px;top:544px" width="28" height="24" viewBox="0 0 28 24"><path d="M7 0 V17" stroke="#c6c6c6" stroke-width="4.8"/><path d="M0 16 L13.7 16 L6.85 24 Z" fill="#c6c6c6"/><path d="M20.75 24 V7.5" stroke="#c6c6c6" stroke-width="4.8"/><path d="M14 8.6 L27.5 8.6 L20.75 0 Z" fill="#c6c6c6"/></svg>
<svg class="b" style="left:1897px;top:541px" width="29" height="29" viewBox="0 0 29 29"><circle cx="14.5" cy="14.5" r="12.3" fill="none" stroke="#4a8bcb" stroke-width="3.6"/><path d="M14.5 6.5 V14.5 L8 18.5" fill="none" stroke="#4a8bcb" stroke-width="3"/></svg>
<div class="t" style="left:1944.0px;top:542.7px;font-size:24px;color:#333;letter-spacing:0.4px;">hire_date</div>
<svg class="b" style="left:2066px;top:544px" width="28" height="24" viewBox="0 0 28 24"><path d="M7 0 V17" stroke="#c6c6c6" stroke-width="4.8"/><path d="M0 16 L13.7 16 L6.85 24 Z" fill="#c6c6c6"/><path d="M20.75 24 V7.5" stroke="#c6c6c6" stroke-width="4.8"/><path d="M14 8.6 L27.5 8.6 L20.75 0 Z" fill="#c6c6c6"/></svg>
<div class="t" style="left:599.0px;top:596.7px;font-size:24px;color:#333;letter-spacing:0.4px;">1</div>
<div class="t" style="left:719.0px;top:596.7px;font-size:24px;color:#333;letter-spacing:0.4px;">10001</div>
<div class="t" style="left:940.0px;top:596.7px;font-size:24px;color:#333;letter-spacing:0.4px;">1953-09-02</div>
<div class="t" style="left:1186.0px;top:596.7px;font-size:24px;color:#333;letter-spacing:0.4px;">Georgi</div>
<div class="t" style="left:1438.0px;top:596.7px;font-size:24px;color:#333;letter-spacing:0.4px;">Facello</div>
<div class="t" style="left:1686.0px;top:596.7px;font-size:24px;color:#333;letter-spacing:0.4px;">M</div>
<div class="t" style="left:1896.0px;top:596.7px;font-size:24px;color:#333;letter-spacing:0.4px;">1986-06-26</div>
<div class="t" style="left:599.0px;top:646.7px;font-size:24px;color:#333;letter-spacing:0.4px;">2</div>
<div class="t" style="left:719.0px;top:646.7px;font-size:24px;color:#333;letter-spacing:0.4px;">10002</div>
<div class="t" style="left:940.0px;top:646.7px;font-size:24px;color:#333;letter-spacing:0.4px;">1964-06-02</div>
<div class="t" style="left:1186.0px;top:646.7px;font-size:24px;color:#333;letter-spacing:0.4px;">Bezalel</div>
<div class="t" style="left:1438.0px;top:646.7px;font-size:24px;color:#333;letter-spacing:0.4px;">Simmel</div>
<div class="t" style="left:1686.0px;top:646.7px;font-size:24px;color:#333;letter-spacing:0.4px;">F</div>
<div class="t" style="left:1896.0px;top:646.7px;font-size:24px;color:#333;letter-spacing:0.4px;">1985-11-21</div>
<div class="t" style="left:599.0px;top:696.7px;font-size:24px;color:#333;letter-spacing:0.4px;">3</div>
<div class="t" style="left:719.0px;top:696.7px;font-size:24px;color:#333;letter-spacing:0.4px;">10003</div>
<div class="t" style="left:940.0px;top:696.7px;font-size:24px;color:#333;letter-spacing:0.4px;">1959-12-03</div>
<div class="t" style="left:1186.0px;top:696.7px;font-size:24px;color:#333;letter-spacing:0.4px;">Parto</div>
<div class="t" style="left:1438.0px;top:696.7px;font-size:24px;color:#333;letter-spacing:0.4px;">Bamford</div>
<div class="t" style="left:1686.0px;top:696.7px;font-size:24px;color:#333;letter-spacing:0.4px;">M</div>
<div class="t" style="left:1896.0px;top:696.7px;font-size:24px;color:#333;letter-spacing:0.4px;">1986-08-28</div>
<div class="t" style="left:599.0px;top:746.7px;font-size:24px;color:#333;letter-spacing:0.4px;">4</div>
<div class="t" style="left:719.0px;top:746.7px;font-size:24px;color:#333;letter-spacing:0.4px;">10004</div>
<div class="t" style="left:940.0px;top:746.7px;font-size:24px;color:#333;letter-spacing:0.4px;">1954-05-01</div>
<div class="t" style="left:1186.0px;top:746.7px;font-size:24px;color:#333;letter-spacing:0.4px;">Chirstian</div>
<div class="t" style="left:1438.0px;top:746.7px;font-size:24px;color:#333;letter-spacing:0.4px;">Koblick</div>
<div class="t" style="left:1686.0px;top:746.7px;font-size:24px;color:#333;letter-spacing:0.4px;">M</div>
<div class="t" style="left:1896.0px;top:746.7px;font-size:24px;color:#333;letter-spacing:0.4px;">1986-12-01</div>
<div class="t" style="left:599.0px;top:796.7px;font-size:24px;color:#333;letter-spacing:0.4px;">5</div>
<div class="t" style="left:719.0px;top:796.7px;font-size:24px;color:#333;letter-spacing:0.4px;">10005</div>
<div class="t" style="left:940.0px;top:796.7px;font-size:24px;color:#333;letter-spacing:0.4px;">1955-01-21</div>
<div class="t" style="left:1186.0px;top:796.7px;font-size:24px;color:#333;letter-spacing:0.4px;">Kyoichi</div>
<div class="t" style="left:1438.0px;top:796.7px;font-size:24px;color:#333;letter-spacing:0.4px;">Maliniak</div>
<div class="t" style="left:1686.0px;top:796.7px;font-size:24px;color:#333;letter-spacing:0.4px;">M</div>
<div class="t" style="left:1896.0px;top:796.7px;font-size:24px;color:#333;letter-spacing:0.4px;">1989-09-12</div>
<div class="t" style="left:599.0px;top:846.7px;font-size:24px;color:#333;letter-spacing:0.4px;">6</div>
<div class="t" style="left:719.0px;top:846.7px;font-size:24px;color:#333;letter-spacing:0.4px;">10006</div>
<div class="t" style="left:940.0px;top:846.7px;font-size:24px;color:#333;letter-spacing:0.4px;">1953-04-20</div>
<div class="t" style="left:1186.0px;top:846.7px;font-size:24px;color:#333;letter-spacing:0.4px;">Anneke</div>
<div class="t" style="left:1438.0px;top:846.7px;font-size:24px;color:#333;letter-spacing:0.4px;">Preusig</div>
<div class="t" style="left:1686.0px;top:846.7px;font-size:24px;color:#333;letter-spacing:0.4px;">F</div>
<div class="t" style="left:1896.0px;top:846.7px;font-size:24px;color:#333;letter-spacing:0.4px;">1989-06-02</div>
<div class="t" style="left:599.0px;top:896.7px;font-size:24px;color:#333;letter-spacing:0.4px;">7</div>
<div class="t" style="left:719.0px;top:896.7px;font-size:24px;color:#333;letter-spacing:0.4px;">10007</div>
<div class="t" style="left:940.0px;top:896.7px;font-size:24px;color:#333;letter-spacing:0.4px;">1957-05-23</div>
<div class="t" style="left:1186.0px;top:896.7px;font-size:24px;color:#333;letter-spacing:0.4px;">Tzvetan</div>
<div class="t" style="left:1438.0px;top:896.7px;font-size:24px;color:#333;letter-spacing:0.4px;">Zielinski</div>
<div class="t" style="left:1686.0px;top:896.7px;font-size:24px;color:#333;letter-spacing:0.4px;">F</div>
<div class="t" style="left:1896.0px;top:896.7px;font-size:24px;color:#333;letter-spacing:0.4px;">1989-02-10</div>
<div class="t" style="left:599.0px;top:946.7px;font-size:24px;color:#333;letter-spacing:0.4px;">8</div>
<div class="t" style="left:719.0px;top:946.7px;font-size:24px;color:#333;letter-spacing:0.4px;">10008</div>
<div class="t" style="left:940.0px;top:946.7px;font-size:24px;color:#333;letter-spacing:0.4px;">1958-02-19</div>
<div class="t" style="left:1186.0px;top:946.7px;font-size:24px;color:#333;letter-spacing:0.4px;">Saniya</div>
<div class="t" style="left:1438.0px;top:946.7px;font-size:24px;color:#333;letter-spacing:0.4px;">Kalloufi</div>
<div class="t" style="left:1686.0px;top:946.7px;font-size:24px;color:#333;letter-spacing:0.4px;">M</div>
<div class="t" style="left:1896.0px;top:946.7px;font-size:24px;color:#333;letter-spacing:0.4px;">1994-09-15</div>
<div class="t" style="left:599.0px;top:996.7px;font-size:24px;color:#333;letter-spacing:0.4px;">9</div>
<div class="t" style="left:719.0px;top:996.7px;font-size:24px;color:#333;letter-spacing:0.4px;">10009</div>
<div class="t" style="left:940.0px;top:996.7px;font-size:24px;color:#333;letter-spacing:0.4px;">1952-04-19</div>
<div class="t" style="left:1186.0px;top:996.7px;font-size:24px;color:#333;letter-spacing:0.4px;">Sumant</div>
<div class="t" style="left:1438.0px;top:996.7px;font-size:24px;color:#333;letter-spacing:0.4px;">Peac</div>
<div class="t" style="left:1686.0px;top:996.7px;font-size:24px;color:#333;letter-spacing:0.4px;">F</div>
<div class="t" style="left:1896.0px;top:996.7px;font-size:24px;color:#333;letter-spacing:0.4px;">1985-02-18</div>
<div class="t" style="left:599.0px;top:1046.7px;font-size:24px;color:#333;letter-spacing:0.4px;">10</div>
<div class="t" style="left:719.0px;top:1046.7px;font-size:24px;color:#333;letter-spacing:0.4px;">10010</div>
<div class="t" style="left:940.0px;top:1046.7px;font-size:24px;color:#333;letter-spacing:0.4px;">1963-06-01</div>
<div class="t" style="left:1186.0px;top:1046.7px;font-size:24px;color:#333;letter-spacing:0.4px;">Duangkaew</div>
<div class="t" style="left:1438.0px;top:1046.7px;font-size:24px;color:#333;letter-spacing:0.4px;">Piveteau</div>
<div class="t" style="left:1686.0px;top:1046.7px;font-size:24px;color:#333;letter-spacing:0.4px;">F</div>
<div class="t" style="left:1896.0px;top:1046.7px;font-size:24px;color:#333;letter-spacing:0.4px;">1989-08-24</div>
<div class="t" style="left:599.0px;top:1096.7px;font-size:24px;color:#333;letter-spacing:0.4px;">11</div>
<div class="t" style="left:719.0px;top:1096.7px;font-size:24px;color:#333;letter-spacing:0.4px;">10011</div>
<div class="t" style="left:940.0px;top:1096.7px;font-size:24px;color:#333;letter-spacing:0.4px;">1953-11-07</div>
<div class="t" style="left:1186.0px;top:1096.7px;font-size:24px;color:#333;letter-spacing:0.4px;">Mary</div>
<div class="t" style="left:1438.0px;top:1096.7px;font-size:24px;color:#333;letter-spacing:0.4px;">Sluis</div>
<div class="t" style="left:1686.0px;top:1096.7px;font-size:24px;color:#333;letter-spacing:0.4px;">F</div>
<div class="t" style="left:1896.0px;top:1096.7px;font-size:24px;color:#333;letter-spacing:0.4px;">1990-01-22</div>
<div class="t" style="left:599.0px;top:1146.7px;font-size:24px;color:#333;letter-spacing:0.4px;">12</div>
<div class="t" style="left:719.0px;top:1146.7px;font-size:24px;color:#333;letter-spacing:0.4px;">10012</div>
<div class="t" style="left:940.0px;top:1146.7px;font-size:24px;color:#333;letter-spacing:0.4px;">1960-10-04</div>
<div class="t" style="left:1186.0px;top:1146.7px;font-size:24px;color:#333;letter-spacing:0.4px;">Patricio</div>
<div class="t" style="left:1438.0px;top:1146.7px;font-size:24px;color:#333;letter-spacing:0.4px;">Bridgland</div>
<div class="t" style="left:1686.0px;top:1146.7px;font-size:24px;color:#333;letter-spacing:0.4px;">M</div>
<div class="t" style="left:1896.0px;top:1146.7px;font-size:24px;color:#333;letter-spacing:0.4px;">1992-12-18</div>
<div class="b" style="left:494px;top:1178px;width:2048px;height:60px;background:#f1f1f1"></div>
<svg class="b" style="left:527px;top:1195px" width="33" height="31" viewBox="0 0 33 31"><path d="M20.3 27.2 A13.1 13.1 0 1 1 28 17.9" fill="none" stroke="#555" stroke-width="2.9"/><path d="M23.5 16.3 L23.5 23.9 L30.8 22.3 Z" fill="#555"/></svg>
<svg class="b" style="left:565px;top:1204px" width="15" height="11" viewBox="0 0 15 11"><path d="M1.5 1.5 L7.5 8 L13.5 1.5" fill="none" stroke="#555" stroke-width="3.4"/></svg>
<div class="b" style="left:610px;top:1185px;width:158px;height:50px;box-sizing:border-box;border:3px solid #d0d0d0;border-radius:5px;background:linear-gradient(#fafafa,#ececec)"></div>
<div class="t" style="left:628.0px;top:1197.2px;font-size:26px;color:#333;letter-spacing:-0.3px;">200</div>
<svg class="b" style="left:795px;top:1195px" width="31" height="30" viewBox="0 0 31 30"><path d="M2.4 19.8 V26.6 H27.7 V19.8" fill="none" stroke="#4a8bcb" stroke-width="4.2"/><path d="M0.3 2.7 H7 C10.5 2.7 14.5 5 15 12 M29.8 2.7 H23 C19.5 2.7 15.5 5 15 12" fill="none" stroke="#4a8bcb" stroke-width="3"/><path d="M10.9 12.2 L19.2 12.2 L15.1 17.8 Z" fill="#4a8bcb"/></svg>
<div class="t" style="left:835.0px;top:1197.9px;font-size:23.5px;color:#606060;font-weight:bold;letter-spacing:-0.2px;">200+</div>
<svg class="b" style="left:921px;top:1199px" width="30" height="27" viewBox="0 0 30 27"><g opacity="1"><rect x="0" y="0" width="28" height="4" rx="2" fill="#4a8bcb"/><rect x="0" y="8" width="19" height="4" rx="2" fill="#4a8bcb"/><rect x="0" y="16" width="12" height="4" rx="2" fill="#4a8bcb"/></g><path d="M22 12 V27 M14.5 19.5 H29.5" stroke="#5cb93a" stroke-width="3.4"/></svg>
<svg class="b" style="left:986px;top:1199px" width="31" height="27" viewBox="0 0 31 27"><g opacity="1"><rect x="0" y="0" width="28" height="4" rx="2" fill="#90b8e0"/><rect x="0" y="8" width="19" height="4" rx="2" fill="#90b8e0"/><rect x="0" y="16" width="12" height="4" rx="2" fill="#90b8e0"/></g><text x="12" y="24" font-size="13" font-family="Liberation Sans" fill="#90b8e0">(</text><path d="M21 13 V23 M16 18 H26" stroke="#9fd29a" stroke-width="2"/><text x="25" y="24" font-size="13" font-family="Liberation Sans" fill="#90b8e0">)</text></svg>
<svg class="b" style="left:1050px;top:1199px" width="30" height="27" viewBox="0 0 30 27"><g opacity="1"><rect x="0" y="0" width="28" height="4" rx="2" fill="#90b8e0"/><rect x="0" y="8" width="19" height="4" rx="2" fill="#90b8e0"/><rect x="0" y="16" width="12" height="4" rx="2" fill="#90b8e0"/></g><rect x="14" y="17" width="16" height="3.4" fill="#e07a85"/></svg>
<svg class="b" style="left:1113px;top:1195px" width="31" height="31" viewBox="0 0 31 31"><rect x="1.5" y="8" width="17" height="21" rx="2" fill="none" stroke="#90b8e0" stroke-width="3"/><path d="M10 1 H29 V14" fill="none" stroke="#90b8e0" stroke-width="2" stroke-dasharray="2 2.5"/><path d="M26 14 C30 19 24 23 14 22" fill="none" stroke="#90b8e0" stroke-width="2.5"/><path d="M16 18 L11 22 L16 26Z" fill="#90b8e0"/></svg>
<svg class="b" style="left:1179px;top:1197px" width="28" height="28" viewBox="0 0 28 28"><path d="M7 21 H6 A5.5 5.5 0 0 1 5 10 A8.5 8.5 0 0 1 21.5 8.5 A6 6 0 0 1 21 21 H20" fill="none" stroke="#a6d39a" stroke-width="2.6"/><path d="M13.5 27 V13 M8.5 18 L13.5 13 L18.5 18" fill="none" stroke="#a6d39a" stroke-width="2.6"/></svg>
<div class="t" style="left:1217.0px;top:1199.2px;font-size:22px;color:#a8a8a8;font-weight:bold;">SAVE</div>
<svg class="b" style="left:1309px;top:1196px" width="30" height="30" viewBox="0 0 30 30"><rect x="1.5" y="9" width="16" height="19" rx="2" fill="none" stroke="#90b8e0" stroke-width="3"/><path d="M9 1 H27 V14" fill="none" stroke="#90b8e0" stroke-width="2" stroke-dasharray="2 2.5"/><path d="M17 18 L27 28 M27 18 L17 28" stroke="#e07a85" stroke-width="3"/></svg>
<div class="t" style="left:1349.0px;top:1199.2px;font-size:22px;color:#a8a8a8;font-weight:bold;letter-spacing:-0.6px;">REVERT</div>
<svg class="b" style="left:1467px;top:1197px" width="32" height="30" viewBox="0 0 32 30"><path d="M6 25 V2 H25 L26 0 V4 H23 V9" fill="none" stroke="#90b8e0" stroke-width="2.6"/><rect x="0" y="22" width="17" height="5" fill="#90b8e0"/><circle cx="22" cy="18" r="6" fill="none" stroke="#90b8e0" stroke-width="2.6"/><path d="M26 22 L31 28" stroke="#90b8e0" stroke-width="2.6"/></svg>
<div class="t" style="left:1508.0px;top:1199.2px;font-size:22px;color:#a8a8a8;font-weight:bold;">SCRIPT</div>
<svg class="b" style="left:1625px;top:1197px" width="26" height="26" viewBox="0 0 26 26"><rect x="0" y="0" width="25" height="2.6" fill="#4a8bcb"/><path d="M12.5 25 V9" stroke="#4a8bcb" stroke-width="2.6"/><path d="M6 14 L12.5 7 L19 14" fill="none" stroke="#4a8bcb" stroke-width="2.6"/></svg>
<div class="t" style="left:1663.0px;top:1199.2px;font-size:22px;color:#555;font-weight:bold;letter-spacing:-0.3px;">EXPORT</div>
<div class="t" style="left:2322.0px;top:1197.8px;font-size:25px;color:#7a7a7a;letter-spacing:0.1px;">Success - 84ms</div>
<div class="b" style="left:0;top:1100px;width:2542px;height:138px;background:radial-gradient(ellipse 1300px 115px at 1250px 160px, rgba(0,0,0,0.12), rgba(0,0,0,0) 100%)"></div>
</body></html>
